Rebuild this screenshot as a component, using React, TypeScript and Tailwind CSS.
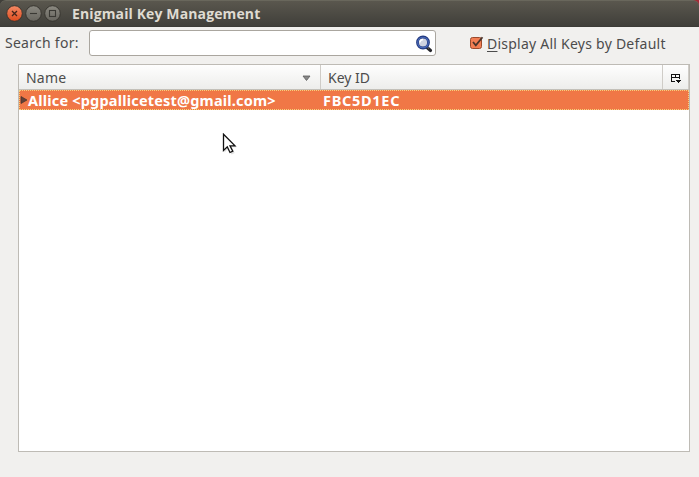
import React from "react";

function WindowButton({ kind }: { kind: "close" | "minimize" | "maximize" }) {
  const close = kind === "close";
  return (
    <svg width="17" height="17" viewBox="0 0 17 17" className="block">
      <defs>
        <linearGradient id={kind} x1="0" y1="0" x2="0" y2="1">
          <stop offset="0" stopColor={close ? "#f58a65" : "#8b8981"} />
          <stop offset="1" stopColor={close ? "#de4c1e" : "#67655e"} />
        </linearGradient>
      </defs>
      <circle cx="8.5" cy="8.5" r="7.8" fill={`url(#${kind})`} stroke="#34322d" strokeWidth="0.9" />
      {close && <path d="M6 6l5 5M11 6l-5 5" stroke="#45251a" strokeWidth="1.3" />}
      {kind === "minimize" && <path d="M5 8.5h7" stroke="#3a3934" strokeWidth="1.1" />}
      {kind === "maximize" && <rect x="5.5" y="5.5" width="6" height="6" fill="none" stroke="#3a3934" strokeWidth="1.1" />}
    </svg>
  );
}

function SearchIcon() {
  return (
    <svg width="18" height="18" viewBox="0 0 18 18" className="block">
      <path d="M11.5 12l4 3.5" stroke="#25252a" strokeWidth="3.2" strokeLinecap="round" />
      <path d="M12.3 12l1.2 1" stroke="#c9c9bb" strokeWidth="1" />
      <circle cx="8" cy="7.5" r="5.5" fill="#cfd3e0" stroke="#243a80" strokeWidth="2.8" />
      <circle cx="8" cy="7.5" r="5.3" fill="none" stroke="#496bb9" strokeWidth="1.1" />
      <path d="M4.9 7.6A3.2 3.2 0 0 1 8 4.5" stroke="#fff" strokeWidth="1.5" fill="none" />
    </svg>
  );
}

export default function App() {
  return (
    <div className="relative flex h-[477px] w-[699px] flex-col overflow-hidden bg-[#f1f0ee] font-['Noto_Sans',sans-serif] text-[14px] leading-5 text-[#4c4c4c]">
      <header className="flex h-[27px] shrink-0 items-center bg-linear-to-r from-[#403f3a] from-50% to-[#a02b36] to-50%">
        <div className="flex h-full w-full items-center rounded-t-[6px] border-t border-[#69675c] border-b border-b-[#3c3b37] bg-linear-to-b from-[#5a574e] to-[#403f3a] pl-[6px]">
          <div className="flex gap-[2px]">
            <WindowButton kind="close" />
            <WindowButton kind="minimize" />
            <WindowButton kind="maximize" />
          </div>
          <h1 className="ml-[11px] whitespace-nowrap font-['Open_Sans',sans-serif] text-[14px] font-bold tracking-[0.12px] text-[#dfdbd2]">Enigmail Key Management</h1>
        </div>
      </header>
      <div className="flex h-[37px] shrink-0 pt-[3px]">
        <label className="ml-[5px] mt-[3px] w-[84px] whitespace-nowrap tracking-[0.27px]">Search for:</label>
        <div className="flex h-[26px] w-[347px] items-start justify-end rounded-[3px] border border-[#aaa69f] bg-white pr-[2px] pt-[4px]">
          <SearchIcon />
        </div>
        <div className="ml-[34px] flex h-[26px] items-center">
          <svg width="15" height="15" viewBox="0 0 15 15" className="mr-[2px] block">
            <rect x="0.5" y="1.5" width="11" height="11" rx="2" fill="#f27e53" stroke="#9b4a2c" />
            <path d="M3 6L5.8 9.3L12.5 1.2" fill="none" stroke="#49342b" strokeWidth="1.8" />
          </svg>
          <span className="mt-[2px] whitespace-nowrap tracking-[0.24px]"><span className="underline underline-offset-[2px]">D</span>isplay All Keys by Default</span>
        </div>
      </div>
      <main className="ml-[18px] flex h-[388px] w-[672px] shrink-0 flex-col border border-[#bebbb5] bg-white">
        <div className="flex h-[25px] shrink-0 border-b border-[#c3c0b9] bg-linear-to-b from-[#fefefe] to-[#ededeb]">
          <div className="flex w-[302px] items-center justify-between border-r border-[#cfccc7] pl-[7px] pr-[9px]">
            <span className="pt-[2px] tracking-[0.2px]">Name</span>
            <svg width="9" height="7" viewBox="0 0 9 7" className="mt-[2px]"><path d="M1 1h7L4.5 5.5z" fill="#888" stroke="#5c5c5c" strokeWidth=".8" /></svg>
          </div>
          <div className="flex w-[342px] items-center border-r border-[#cfccc7] pl-[7px]"><span className="pt-[2px]">Key ID</span></div>
          <div className="flex w-[26px] items-center justify-center border-r border-[#cfccc7] pt-[2px]">
            <svg width="10" height="9" viewBox="0 0 10 9" shapeRendering="crispEdges" fill="#111">
              <path d="M0 0h9v1H0zM0 1h1v7H0zM4 1h1v3H4zM8 1h1v4H8zM0 3h9v1H0zM0 7h4v1H0z" />
              <path d="M5 6h5v1H9v1H8v1H7V8H6V7H5z" />
            </svg>
          </div>
        </div>
        <div className="flex h-[20px] shrink-0 items-center border border-dotted border-[#f5d27c] bg-[#f07746] text-[14.5px] font-bold text-white">
          <svg width="8" height="8" viewBox="0 0 8 8" className="block shrink-0"><path d="M1 .5v7L7 4z" fill="#644037" stroke="#46342f" strokeWidth=".7" /></svg>
          <span className="w-[295px] whitespace-nowrap tracking-[0.19px]">Allice &lt;pgpallicetest@gmail.com&gt;</span>
          <span className="tracking-[0.7px]">FBC5D1EC</span>
        </div>
      </main>
      <svg width="15" height="23" viewBox="0 0 15 23" className="absolute left-[222px] top-[133px]">
        <path d="M2.5 2.5v17l4-4 3 6 3.2-1.6-3-5.6h5z" fill="#999" opacity=".3" />
        <path d="M1.5 1.2v16.3l3.8-3.6 2.7 5.6 2.8-1.3-2.8-5.3h5z" fill="#fff" stroke="#111" strokeWidth="1.3" />
      </svg>
    </div>
  );
}
